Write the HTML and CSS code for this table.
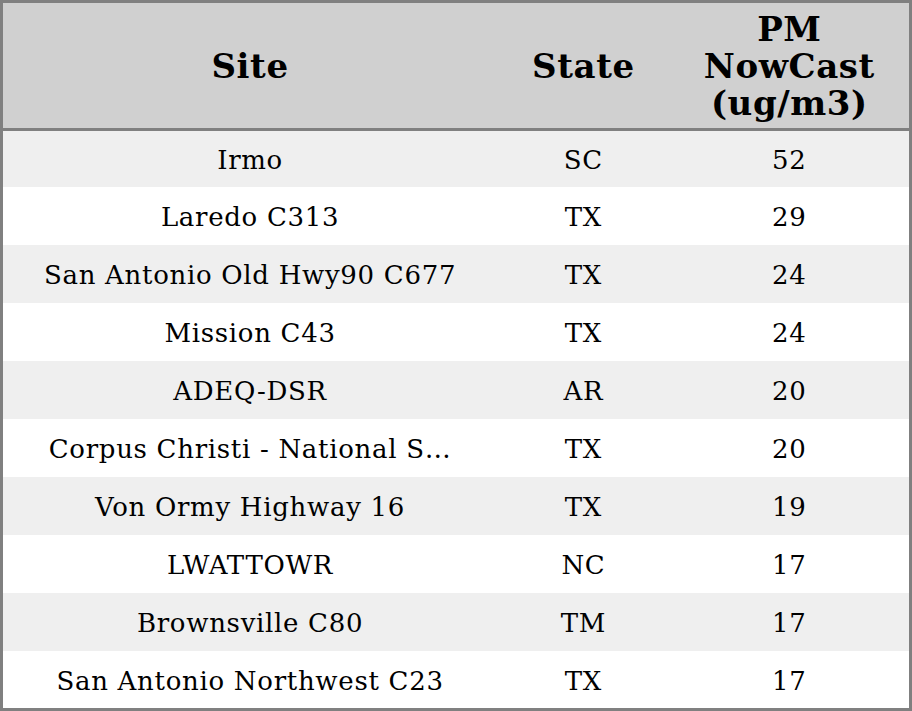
FILE: index.html
```html
<!DOCTYPE html>
<html>
<head>
<meta charset="utf-8">
<link rel="stylesheet" href="styles.css">
</head>
<body>
<table class="tbl">
  <colgroup>
    <col class="c-site">
    <col class="c-state">
    <col class="c-pm">
  </colgroup>
  <thead>
    <tr>
      <th>Site</th>
      <th>State</th>
      <th>PM<br>NowCast<br>(ug/m3)</th>
    </tr>
  </thead>
  <tbody>
    <tr><td>Irmo</td><td>SC</td><td>52</td></tr>
    <tr><td>Laredo C313</td><td>TX</td><td>29</td></tr>
    <tr><td>San Antonio Old Hwy90 C677</td><td>TX</td><td>24</td></tr>
    <tr><td>Mission C43</td><td>TX</td><td>24</td></tr>
    <tr><td>ADEQ-DSR</td><td>AR</td><td>20</td></tr>
    <tr><td>Corpus Christi - National S…</td><td>TX</td><td>20</td></tr>
    <tr><td>Von Ormy Highway 16</td><td>TX</td><td>19</td></tr>
    <tr><td>LWATTOWR</td><td>NC</td><td>17</td></tr>
    <tr><td>Brownsville C80</td><td>TM</td><td>17</td></tr>
    <tr><td>San Antonio Northwest C23</td><td>TX</td><td>17</td></tr>
  </tbody>
</table>
</body>
</html>
```
FILE: styles.css
```css
html, body {
  margin: 0;
  padding: 0;
  background: #ffffff;
}
.tbl {
  width: 912px;
  border-collapse: collapse;
  border: 3px solid #808080;
  font-family: "DejaVu Serif", serif;
  color: #000;
  table-layout: fixed;
}
.c-site { width: 494px; }
.c-state { width: 172px; }
.c-pm { width: 240px; }
.tbl th {
  background: #d0d0d0;
  font-size: 34px;
  font-weight: bold;
  line-height: 37px;
  height: 123px;
  padding: 2px 0 0;
  text-align: center;
  vertical-align: middle;
  border-bottom: 3px solid #808080;
  letter-spacing: 0.6px;
}
.tbl td {
  font-size: 26px;
  height: 56px;
  padding: 2px 0 0;
  text-align: center;
  vertical-align: middle;
  letter-spacing: 0.7px;
  white-space: nowrap;
}
.tbl tbody tr:first-child td {
  height: 54px;
}
.tbl tbody tr:last-child td {
  height: 55px;
}
.tbl tbody tr:nth-child(odd) td {
  background: #efefef;
}
.tbl tbody tr:nth-child(even) td {
  background: #ffffff;
}
```
